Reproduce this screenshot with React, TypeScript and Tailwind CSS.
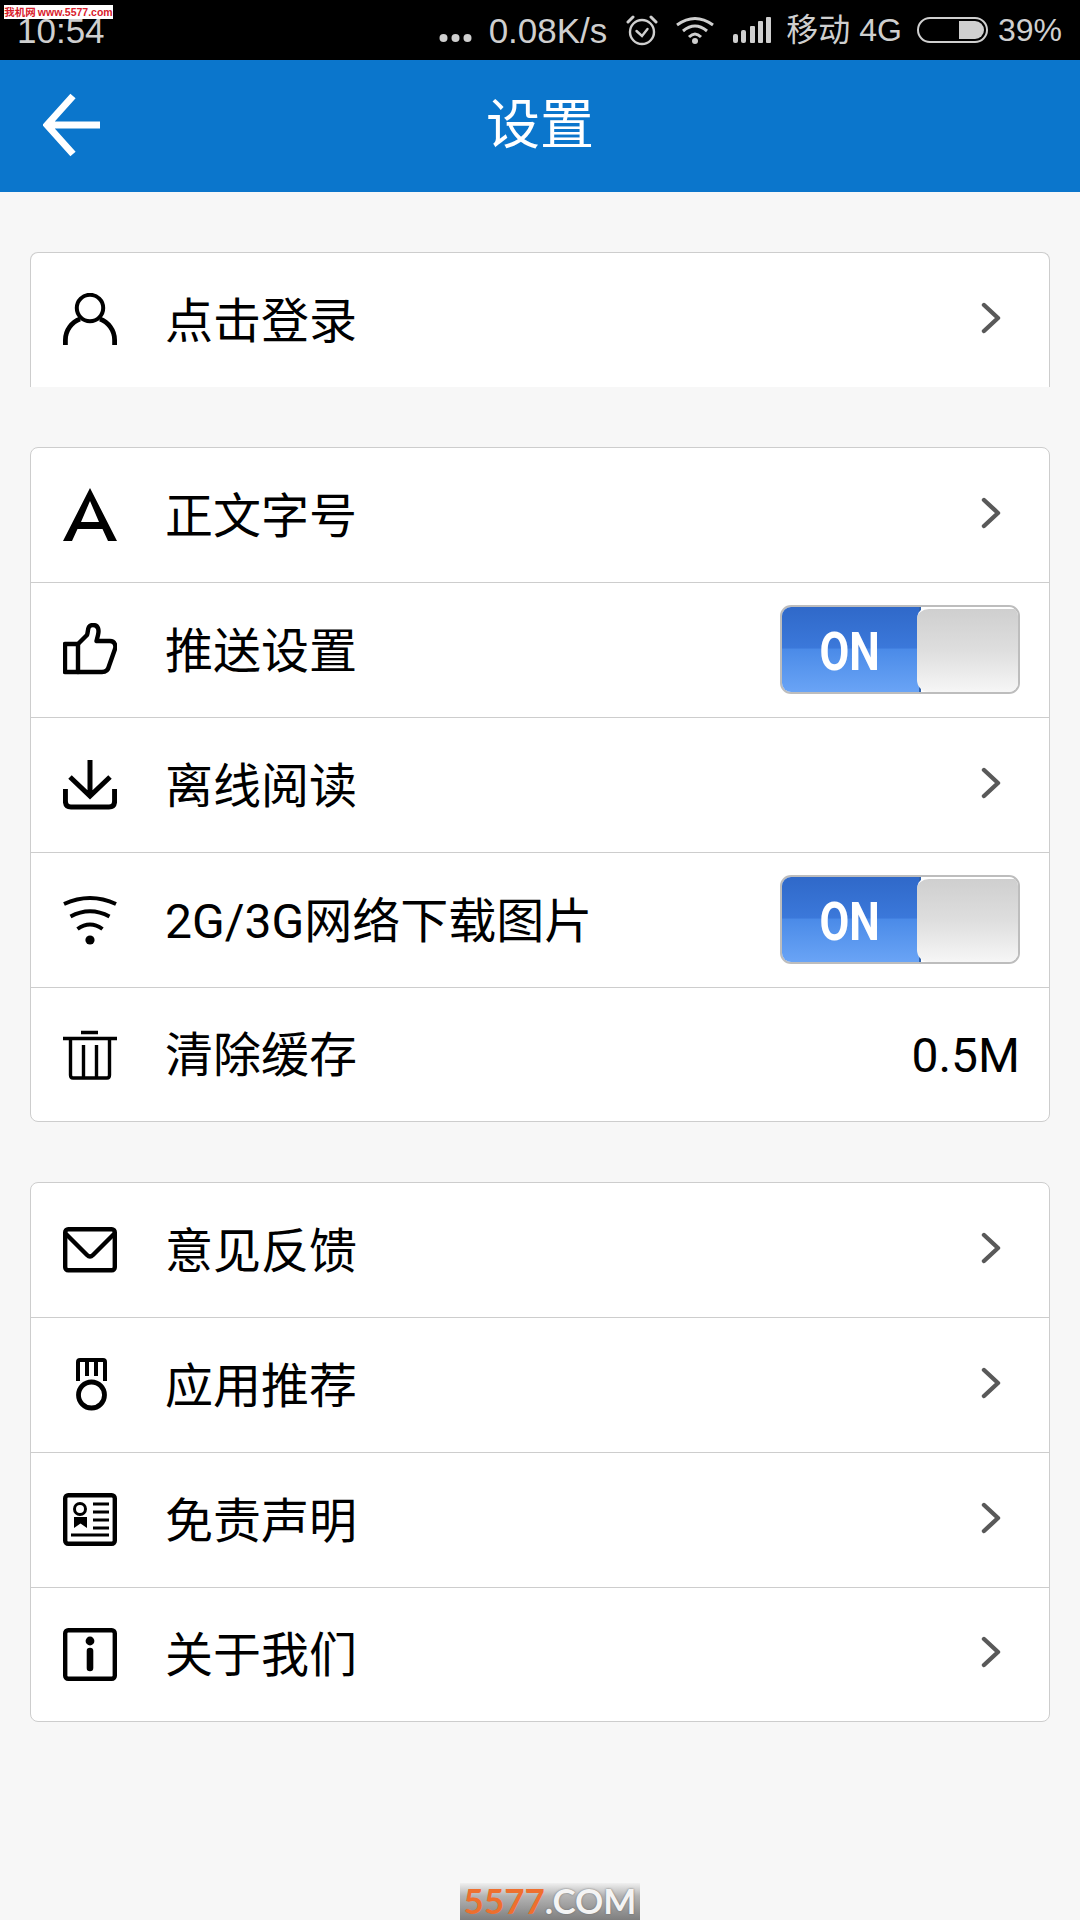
import React from "react";

const S = { fill: "none", stroke: "currentColor", strokeLinecap: "round", strokeLinejoin: "round" } as const;

const Box = ({ children }: { children: React.ReactNode }) => (
  <svg width="54" height="54" viewBox="0 0 54 54" className="shrink-0 text-black">{children}</svg>
);

const icons: Record<string, React.ReactNode> = {
  user: (
    <Box>
      <circle cx="27" cy="15" r="13.2" {...S} strokeWidth="4" />
      <path d="M2.4 52V47C2.4 37 9 29 17 26M51.6 52V47C51.6 37 45 29 37 26" fill="none" stroke="currentColor" strokeWidth="4.8" />
    </Box>
  ),
  font: (
    <Box>
      <path d="M27 0L54 53H45L39.5 41H14.5L9 53H0ZM27 13L18 34H36Z" fill="currentColor" fillRule="evenodd" />
    </Box>
  ),
  thumb: (
    <Box>
      <path d="M15 21L24 12C25.5 8 24 2 30 2C36 2 36 8 35 12L33.5 18H47C52 18 53 23 52 26L46 43C45 48 42 49 39 49H2V21Z" {...S} strokeWidth="4.4" />
      <path d="M15 21V49" {...S} strokeWidth="4.4" />
    </Box>
  ),
  download: (
    <Box>
      <g transform="translate(0 2)">
        <path d="M27 0V36M7 17L27 36L47 17" fill="none" stroke="currentColor" strokeWidth="5" />
        <path d="M2.4 29V41C2.4 45 4 47 8 47H46C50 47 51.6 45 51.6 41V29" {...S} strokeLinecap="butt" strokeWidth="5" />
      </g>
    </Box>
  ),
  wifi: (
    <Box>
      <g transform="translate(0 3)">
        <path d="M1 8Q27 -4 53 8M7.5 20.5Q27 10 46.5 20.5M14.5 33Q27 24 39.5 33" {...S} strokeLinecap="butt" strokeWidth="4" />
        <circle cx="27" cy="44" r="4.6" fill="currentColor" />
      </g>
    </Box>
  ),
  trash: (
    <Box>
      <g transform="translate(0 3)">
        <path d="M18 1.5H35M0 7.5H54M7.5 7.5V44C7.5 46.5 8.5 47 10 47H44C45.5 47 46.5 46.5 46.5 44V7.5M20.5 14V47M33.5 14V47" {...S} strokeLinecap="butt" strokeWidth="3.4" />
      </g>
    </Box>
  ),
  mail: (
    <Box>
      <g transform="translate(0 4)">
        <rect x="2.2" y="2.2" width="49.6" height="41" rx="3" {...S} strokeWidth="4.4" />
        <path d="M3 7L24 28Q27 31 30 28L51 7" {...S} strokeWidth="4.4" />
      </g>
    </Box>
  ),
  medal: (
    <Box>
      <path d="M15 23V4Q15 2 17 2H40Q42 2 42 4V23M24 3V18M33 3V18" fill="none" stroke="currentColor" strokeWidth="4" />
      <circle cx="28.5" cy="37" r="13" {...S} strokeWidth="4.8" />
    </Box>
  ),
  cert: (
    <Box>
      <rect x="2.2" y="2.2" width="49.6" height="48.6" rx="3" {...S} strokeWidth="4.4" />
      <circle cx="17" cy="16" r="5.5" {...S} strokeWidth="3" />
      <path d="M11 24H24V35L17.5 30.5L11 35Z" fill="currentColor" />
      <path d="M30 11H46M30 19H46M30 27H46M30 35H46M8 42H46" fill="none" stroke="currentColor" strokeWidth="3" />
    </Box>
  ),
  info: (
    <Box>
      <rect x="2.2" y="2.2" width="49.6" height="48.6" rx="3" {...S} strokeWidth="4.4" />
      <circle cx="27" cy="13" r="4.4" fill="currentColor" />
      <path d="M27 23V40" {...S} strokeWidth="6.6" />
    </Box>
  ),
};

const Chevron = () => (
  <svg width="20" height="32" viewBox="0 0 20 32" className="mr-[48px] -mt-[5px] text-[#595959]">
    <path d="M3 3L17 16L3 29" {...S} strokeWidth="4.4" />
  </svg>
);

const Toggle = () => (
  <div className="mr-[29px] -mt-[2px] flex h-[89px] w-[240px] overflow-hidden rounded-[11px] border-2 border-[#bdbdbd]">
    <div className="-m-[2px] flex h-[89px] w-[141px] items-center justify-center border-r-2 border-[#2f62ad] bg-[linear-gradient(#2f68c8_0%,#3b78da_48%,#4b8be8_50%,#6ba5f6_100%)] pt-[6px]">
      <span className="scale-x-[.8] text-[54px] leading-none font-bold text-white">ON</span>
    </div>
    <div className="z-10 -ml-[2px] flex-1 rounded-l-[12px] border-t-2 border-white bg-[linear-gradient(#cfcfcf_0%,#dedede_50%,#f6f6f6_100%)]" />
  </div>
);

type Row = { icon: string; label: string; right?: "chevron" | "toggle" | "value" };

const Label = ({ text }: { text: string }) => (
  <span className="flex-1 pt-[3px] text-[48px] leading-none text-black">{text}</span>
);

const SettingRow = ({ icon, label, right = "chevron", first, last }: Row & { first: boolean; last: boolean }) => (
  <div className={`flex items-center ${first ? "h-[134px]" : last ? "h-[134px] border-t border-[#cdcdcd]" : "h-[135px] border-t border-[#cdcdcd]"}`}>
    <div className="ml-[32px] mr-[48px]">{icons[icon]}</div>
    <Label text={label} />
    {right === "chevron" && <Chevron />}
    {right === "toggle" && <Toggle />}
    {right === "value" && <span className="mr-[29px] pt-[3px] text-[48px] leading-none text-black">0.5M</span>}
  </div>
);

const groups: Row[][] = [
  [
    { icon: "font", label: "正文字号" },
    { icon: "thumb", label: "推送设置", right: "toggle" },
    { icon: "download", label: "离线阅读" },
    { icon: "wifi", label: "2G/3G网络下载图片", right: "toggle" },
    { icon: "trash", label: "清除缓存", right: "value" },
  ],
  [
    { icon: "mail", label: "意见反馈" },
    { icon: "medal", label: "应用推荐" },
    { icon: "cert", label: "免责声明" },
    { icon: "info", label: "关于我们" },
  ],
];

const StatusBar = () => (
  <div className="flex h-[60px] items-center bg-black pl-[17px] pr-[18px] text-[35px] leading-none text-[#cfcfcf] font-['Liberation_Sans','Noto_Sans_CJK_SC',sans-serif]">
    <span className="pt-[1px]">10:54</span>
    <div className="ml-auto flex items-center">
      <svg width="33" height="10" viewBox="0 0 33 10" className="mt-[16px] mr-[17px]" fill="currentColor">
        <circle cx="4.5" cy="5" r="4" />
        <circle cx="16.5" cy="5" r="4" />
        <circle cx="28.5" cy="5" r="4" />
      </svg>
      <span className="mr-[19px]">0.08K/s</span>
      <svg width="32" height="32" viewBox="0 0 32 32" className="mr-[18px]" fill="none" stroke="currentColor" strokeWidth="2.4">
        <circle cx="16" cy="18" r="12" />
        <path d="M10.5 17L16 22L21.5 15" strokeLinecap="round" />
        <path d="M2 8L7 3M30 8L25 3" strokeLinecap="round" strokeWidth="3" />
      </svg>
      <svg width="38" height="30" viewBox="0 0 38 30" className="mr-[19px]" fill="none" stroke="currentColor" strokeWidth="3">
        <path d="M1 10Q19 -3 37 10M7 16Q19 6 31 16M13 22Q19 16 25 22" />
        <circle cx="19" cy="26" r="3" fill="currentColor" stroke="none" />
      </svg>
      <svg width="38" height="28" viewBox="0 0 38 28" className="mr-[15px]" fill="currentColor">
        <rect x="0" y="18" width="5" height="9" rx="2" />
        <rect x="8" y="14" width="5" height="13" rx="2" />
        <rect x="17" y="10" width="5" height="17" rx="1" />
        <rect x="25" y="5" width="5" height="22" rx="1" />
        <rect x="33" y="1" width="5" height="26" rx="1" />
      </svg>
      <span className="mr-[15px] text-[32px]">移动 4G</span>
      <div className="mr-[10px] flex h-[26px] w-[71px] items-center justify-end rounded-[13px] border-2 border-[#cfcfcf] pr-[2px]">
        <div className="h-[18px] w-[25px] rounded-r-[9px] bg-[#cfcfcf]" />
      </div>
      <span className="text-[32px]">39%</span>
    </div>
  </div>
);

export default function App() {
  return (
    <div className="relative h-[1920px] w-[1080px] overflow-hidden bg-[#f7f7f7] font-['Roboto','Noto_Sans_CJK_SC',sans-serif]">
      <div className="absolute left-[4px] top-[5px] z-10 flex h-[14px] w-[109px] items-center justify-center gap-[2px] bg-white text-[10.5px] leading-none font-bold whitespace-nowrap font-['Liberation_Sans','Noto_Sans_CJK_SC',sans-serif]">
        <span className="text-[#d8202c]">我机网</span>
        <span className="text-[#d8202c]">www.5577.com</span>
      </div>

      <StatusBar />

      <div className="relative flex h-[132px] items-center justify-center bg-[#0b76cc]">
        <svg width="60" height="64" viewBox="0 0 60 64" className="absolute left-[43px] top-[33px] text-white">
          <path d="M57 32H4M30 3L4 32L30 61" fill="none" stroke="currentColor" strokeWidth="7" />
        </svg>
        <span className="text-[54px] leading-none text-white">设置</span>
      </div>

      <div className="mx-[30px] mt-[60px] flex h-[135px] items-center rounded-t-[8px] border-x border-t border-[#cdcdcd] bg-white">
        <div className="ml-[32px] mr-[48px]">{icons.user}</div>
        <Label text="点击登录" />
        <Chevron />
      </div>

      {groups.map((g, i) => (
        <div key={i} className="mx-[30px] mt-[60px] overflow-hidden rounded-[8px] border border-[#cdcdcd] bg-white">
          {g.map((r, j) => (
            <SettingRow key={r.label} {...r} first={j === 0} last={j === g.length - 1} />
          ))}
        </div>
      ))}

      <div className="absolute bottom-0 left-[460px] flex h-[37px] w-[180px] items-start justify-center bg-[linear-gradient(#f0f0f0,#b4b4b4_35%,#7f7f7f)] pt-[1px] text-[35px] leading-[32px] font-bold font-['Lato',sans-serif]">
        <span className="text-[#ee6f2e]">5577</span>
        <span className="text-[#f4f4f4] [text-shadow:0_0_2px_#666]">.COM</span>
      </div>
    </div>
  );
}
